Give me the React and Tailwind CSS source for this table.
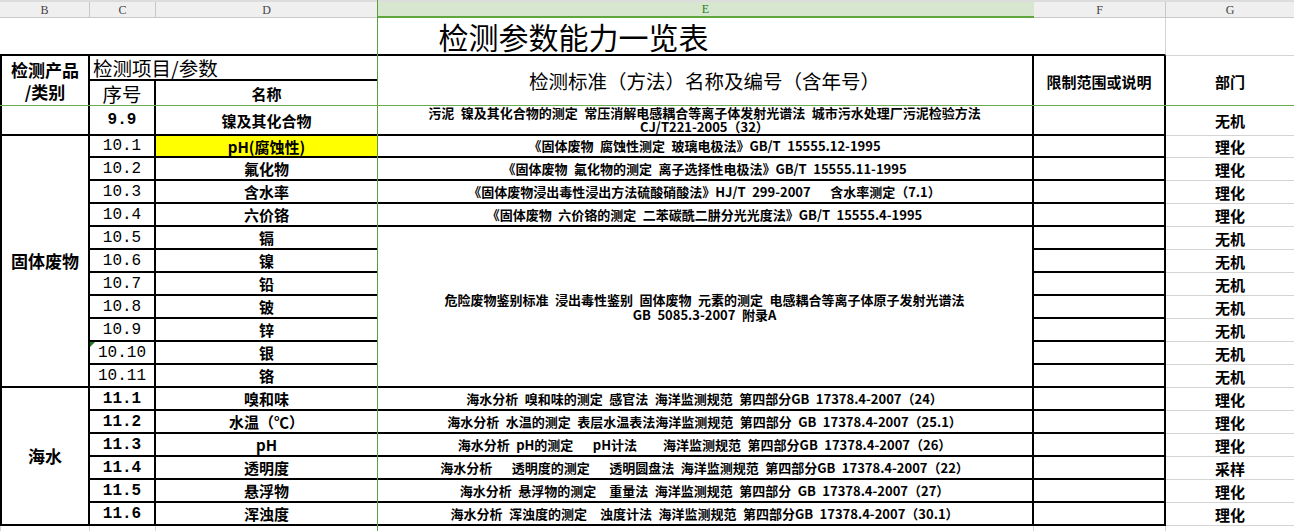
const sp = (s) => s.replace(/ /g, '\u2002');

const cols = [
  { key: 'B', w: 'w-[90px]' },
  { key: 'C', w: 'w-[66px]' },
  { key: 'D', w: 'w-[221px]' },
  { key: 'E', w: 'w-[657px]' },
  { key: 'F', w: 'w-[132px]' },
  { key: 'G', w: 'w-[128px]' },
];

// one entry per sheet row, top to bottom
const rows = [
  { no: '9.9', numBold: true, name: '镍及其化合物', h: 'h-[30px]', dept: '无机', cat: 'empty',
    std: ['污泥 镍及其化合物的测定 常压消解电感耦合等离子体发射光谱法 城市污水处理厂污泥检验方法', 'CJ/T221-2005（32）'] },
  { no: '10.1', name: 'pH(腐蚀性)', yellow: true, h: 'h-[22px]', dept: '理化', cat: { text: '固体废物', span: 11 },
    std: ['《固体废物 腐蚀性测定 玻璃电极法》GB/T 15555.12-1995'] },
  { no: '10.2', name: '氟化物', h: 'h-[23px]', dept: '理化', std: ['《固体废物 氟化物的测定 离子选择性电极法》GB/T 15555.11-1995'] },
  { no: '10.3', name: '含水率', h: 'h-[23px]', dept: '理化', std: ['《固体废物浸出毒性浸出方法硫酸硝酸法》HJ/T 299-2007   含水率测定（7.1）'] },
  { no: '10.4', name: '六价铬', h: 'h-[23px]', dept: '理化', std: ['《固体废物 六价铬的测定 二苯碳酰二肼分光光度法》GB/T 15555.4-1995'] },
  { no: '10.5', name: '镉', h: 'h-[23px]', dept: '无机', merged: 7,
    std: ['危险废物鉴别标准 浸出毒性鉴别 固体废物 元素的测定 电感耦合等离子体原子发射光谱法', 'GB 5085.3-2007 附录A'] },
  { no: '10.6', name: '镍', h: 'h-[23px]', dept: '无机', skipStd: true },
  { no: '10.7', name: '铅', h: 'h-[23px]', dept: '无机', skipStd: true },
  { no: '10.8', name: '铍', h: 'h-[23px]', dept: '无机', skipStd: true },
  { no: '10.9', name: '锌', h: 'h-[23px]', dept: '无机', skipStd: true },
  { no: '10.10', name: '银', h: 'h-[23px]', dept: '无机', skipStd: true, flag: true },
  { no: '10.11', name: '铬', h: 'h-[23px]', dept: '无机', skipStd: true },
  { no: '11.1', numBold: true, name: '嗅和味', h: 'h-[23px]', dept: '理化', cat: { text: '海水', span: 6 },
    std: ['海水分析 嗅和味的测定 感官法 海洋监测规范 第四部分GB 17378.4-2007（24）'] },
  { no: '11.2', numBold: true, name: '水温（℃）', h: 'h-[23px]', dept: '理化',
    std: ['海水分析 水温的测定 表层水温表法海洋监测规范 第四部分 GB 17378.4-2007（25.1）'] },
  { no: '11.3', numBold: true, name: 'pH', h: 'h-[23px]', dept: '理化',
    std: ['海水分析 pH的测定   pH计法    海洋监测规范 第四部分GB 17378.4-2007（26）'] },
  { no: '11.4', numBold: true, name: '透明度', h: 'h-[23px]', dept: '采样',
    std: ['海水分析   透明度的测定   透明圆盘法 海洋监测规范 第四部分GB 17378.4-2007（22）'] },
  { no: '11.5', numBold: true, name: '悬浮物', h: 'h-[23px]', dept: '理化',
    std: ['海水分析 悬浮物的测定  重量法 海洋监测规范 第四部分 GB 17378.4-2007（27）'] },
  { no: '11.6', numBold: true, name: '浑浊度', h: 'h-[23px]', dept: '理化',
    std: ['海水分析 浑浊度的测定  浊度计法 海洋监测规范 第四部分GB 17378.4-2007（30.1）'] },
];

const bCell = 'border-l-2 border-r-2 border-b-2 border-black';
const cell = 'border-r-2 border-b-2 border-black';
const gCell = 'border-b border-[#d4d4d4]';

function DataRow({ r }) {
  return (
    <tr className={r.h}>
      {r.cat === 'empty' && <td className={bCell} />}
      {r.cat && r.cat !== 'empty' && (
        <td rowSpan={r.cat.span} className={`${bCell} text-center align-middle text-[17px] font-bold`}>
          {r.cat.text}
        </td>
      )}
      <td className={`${cell} relative p-0 text-center font-['Liberation_Mono',monospace] text-[16px] leading-none ${r.numBold ? 'font-bold' : ''}`}>
        {r.flag && (
          <span className="absolute left-0 top-0 h-0 w-0 border-t-[5px] border-r-[5px] border-t-[#1f7a1f] border-r-transparent" />
        )}
        {r.no}
      </td>
      <td className={`border-b-2 border-black p-0 text-center text-[15px] font-bold leading-none ${r.yellow ? 'bg-[#ffff00]' : ''}`}>
        {r.name}
      </td>
      {!r.skipStd && (
        <td rowSpan={r.merged || 1} className={`${cell} p-0 text-center text-[13px] font-bold ${r.merged ? 'leading-[15px]' : 'leading-[14px]'} whitespace-nowrap`}>
          {r.std.map((l, i) => (
            <div key={i}>{sp(l)}</div>
          ))}
        </td>
      )}
      <td className={cell} />
      <td className={`${gCell} p-0 text-center text-[15px] font-bold leading-none`}>{r.dept}</td>
    </tr>
  );
}

export default function App() {
  return (
    <div className="relative h-[531px] w-[1294px] overflow-hidden bg-white text-black font-['Noto_Sans_CJK_SC','Noto_Sans',sans-serif]">
      {/* column letters */}
      <div className="flex h-[18px] border-t-2 border-[#dcdcdc] bg-[#efefef] font-['Liberation_Serif',serif] text-[12px] text-[#444]">
        {cols.map((c) => (
          <div
            key={c.key}
            className={`${c.w} flex shrink-0 items-center justify-center ${
              c.key === 'E'
                ? 'border-b-2 border-[#5ea63e] bg-[#d7e6ce] text-[#2f7d1c]'
                : c.key === 'D' || c.key === 'G'
                ? 'border-b border-[#c8c8c8]'
                : 'border-r border-b border-[#c8c8c8]'
            }`}
          >
            {c.key}
          </div>
        ))}
      </div>

      <table className="w-[1294px] table-fixed border-separate border-spacing-0">
        <colgroup>
          {cols.map((c) => (
            <col key={c.key} className={c.w} />
          ))}
        </colgroup>
        <tbody>
          <tr className="h-[38px]">
            <td colSpan={5} className="border-r border-b-2 border-black border-r-[#d4d4d4] p-0 pr-[18px] text-center text-[30px] leading-none">
              检测参数能力一览表
            </td>
            <td className={gCell} />
          </tr>
          <tr className="h-[25px]">
            <td rowSpan={2} className="border-l-2 border-r-2 border-black p-0 text-center text-[17px] font-bold leading-[22px]">
              <div>检测产品</div>
              <div>/类别</div>
            </td>
            <td colSpan={2} className="border-b-2 border-black p-0 pl-[3px] text-left text-[19.5px] leading-none">
              检测项目/参数
            </td>
            <td rowSpan={2} className="border-r-2 border-black p-0 text-center text-[19.5px] leading-none">
              检测标准（方法）名称及编号（含年号）
            </td>
            <td rowSpan={2} className="border-r-2 border-black p-0 text-center text-[15px] font-bold leading-none">
              限制范围或说明
            </td>
            <td rowSpan={2} className="p-0 text-center text-[15px] font-bold leading-none">
              部门
            </td>
          </tr>
          <tr className="h-[25px]">
            <td className="border-r-2 border-black p-0 text-center text-[19.5px] leading-none">序号</td>
            <td className="p-0 text-center text-[15px] font-bold leading-none">名称</td>
          </tr>
          {rows.map((r) => (
            <DataRow key={r.no} r={r} />
          ))}
          <tr className="h-[20px]">
            <td className="border-l border-r border-[#d4d4d4]" />
            <td className="border-r border-[#d4d4d4]" />
            <td />
            <td className="border-r border-[#d4d4d4]" />
            <td className="border-r border-[#d4d4d4]" />
            <td />
          </tr>
        </tbody>
      </table>

      {/* frozen pane lines */}
      <div className="absolute left-[377px] top-0 h-full w-px bg-[#5a9f3b]" />
      <div className="absolute left-0 top-[105px] h-px w-full bg-[#6aab4c]" />
    </div>
  );
}
